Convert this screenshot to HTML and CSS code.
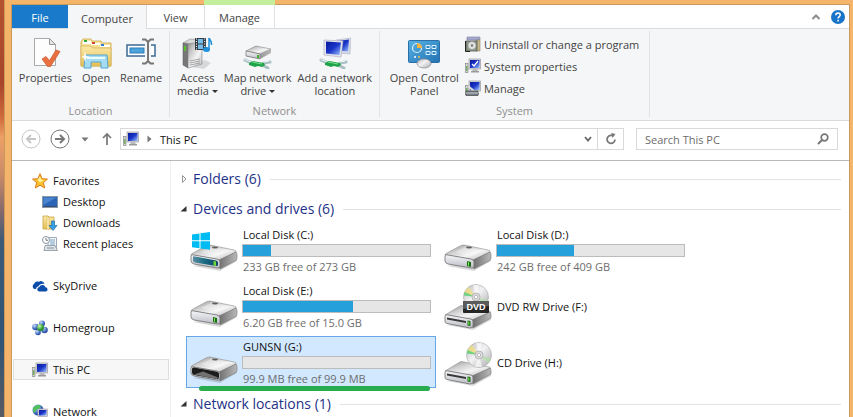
FILE: index.html
```html
<!DOCTYPE html>
<html lang="en">
<head>
    <meta charset="UTF-8">
    <meta name="viewport" content="width=device-width, initial-scale=1.0">
    <title>This PC</title>
    <link rel="stylesheet" href="styles.css">
</head>
<body>

<!-- Shared icon shapes -->
<svg class="sprite" aria-hidden="true">
    <defs>
        <linearGradient id="metal-top" x1="0" y1="0" x2="1" y2="1">
            <stop offset="0" stop-color="#8f8f8f"/>
            <stop offset=".35" stop-color="#d2d2d2"/>
            <stop offset=".6" stop-color="#f4f4f4"/>
            <stop offset="1" stop-color="#b4b4b4"/>
        </linearGradient>
        <linearGradient id="metal-side" x1="0" y1="0" x2="1" y2="0">
            <stop offset="0" stop-color="#6f6f6f"/>
            <stop offset="1" stop-color="#b9b9b9"/>
        </linearGradient>
        <linearGradient id="metal-front" x1="0" y1="0" x2="0" y2="1">
            <stop offset="0" stop-color="#f7f7fa"/>
            <stop offset="1" stop-color="#b9bbc4"/>
        </linearGradient>
        <linearGradient id="teal" x1="0" y1="0" x2="1" y2="0">
            <stop offset="0" stop-color="#5b8ea3"/>
            <stop offset=".5" stop-color="#17697f"/>
            <stop offset="1" stop-color="#12466a"/>
        </linearGradient>
        <linearGradient id="screen" x1="0" y1="0" x2="1" y2="1">
            <stop offset="0" stop-color="#0a1a9c"/>
            <stop offset=".5" stop-color="#1a35c8"/>
            <stop offset="1" stop-color="#9fc4ff"/>
        </linearGradient>
        <linearGradient id="gold" x1="0" y1="0" x2="0" y2="1">
            <stop offset="0" stop-color="#fbe9a8"/>
            <stop offset="1" stop-color="#e6bf55"/>
        </linearGradient>
        <linearGradient id="panel" x1="0" y1="0" x2="1" y2="1">
            <stop offset="0" stop-color="#57b2e4"/>
            <stop offset="1" stop-color="#2472b3"/>
        </linearGradient>
        <linearGradient id="disc" x1="0" y1="0" x2="1" y2="1">
            <stop offset="0" stop-color="#b5b5bb"/>
            <stop offset=".45" stop-color="#f3f3f5"/>
            <stop offset="1" stop-color="#a9a9ae"/>
        </linearGradient>
        <radialGradient id="ball-blue" cx=".35" cy=".3" r=".8">
            <stop offset="0" stop-color="#c9defa"/>
            <stop offset=".6" stop-color="#3f68bd"/>
            <stop offset="1" stop-color="#21408f"/>
        </radialGradient>
        <radialGradient id="ball-green" cx=".35" cy=".3" r=".8">
            <stop offset="0" stop-color="#d0f5b0"/>
            <stop offset=".6" stop-color="#35a43b"/>
            <stop offset="1" stop-color="#1c7326"/>
        </radialGradient>
    </defs>

    <symbol id="drive-body" viewBox="0 0 48 48">
        <path d="M3 40l27 5 17-10v-3z" fill="#000" opacity=".15"/>
        <path d="M1 29Q1 28 3 27L16 20q2-1 4-1l24 5q3 1 2 2L30 34z" fill="url(#metal-top)" stroke="#8c8c8c" stroke-width=".6"/>
        <path d="M11 26l10-5 16 4-9 5z" fill="#fff" opacity=".35"/>
        <ellipse cx="25" cy="21.500" rx="3" ry="1" fill="#5f5f5f"/>
        <path d="M29 34l17-8q1 1 1 3v3q0 2-2 3l-15 8z" fill="url(#metal-side)" stroke="#777" stroke-width=".6"/>
        <path d="M1 30q0-2 3-1l23 4q3 1 3 3v4q0 3-3 2L4 38q-3-1-3-3z" fill="url(#metal-front)" stroke="#6f6f6f" stroke-width=".8"/>
    </symbol>
    <symbol id="drive" viewBox="0 0 48 48">
        <use href="#drive-body"/>
        <path d="M23 35l4 1v5l-4-1z" fill="#1d6d17"/>
        <path d="M24 36l1 .3v3.500l-1-.2z" fill="#7cf04d"/>
    </symbol>
    <symbol id="drive-windows" viewBox="0 0 48 48">
        <use href="#drive-body"/>
        <path d="M3 31q0-1 2-.5l21 4q2 .5 2 2v2q0 2-2 1.500L5 36.500q-2-.5-2-2z" fill="url(#teal)"/>
        <path d="M23.500 35l2.500.5v4.500l-2.500-.5z" fill="#6fdc2f"/>
        <path d="M2 8.500L9.500 7.500v6.800H2zM10.500 7.300L20 6v8.300h-9.500zM2 15.300h7.500v7L2 21.200zM10.500 15.300H20v8.400l-9.500-1.300z" fill="#00bcf2"/>
    </symbol>
    <symbol id="drive-removable" viewBox="0 0 48 48">
        <use href="#drive-body"/>
        <path d="M2 31q0-2 2-1.500l22 4q3 .5 3 2.500v3q0 2.500-2 2L4 37q-2-.5-2-2.500z" fill="#1c1c1c"/>
        <path d="M4 36.500l9-3 15 6-1 1.500z" fill="#707070"/>
    </symbol>
    <symbol id="optical-body" viewBox="0 0 48 48">
        <path d="M3 43l26 5 18-10v-3z" fill="#000" opacity=".15"/>
        <path d="M1 33l15-9q1-1 4 0l25 5q3 1 1 2L29 38z" fill="url(#metal-top)" stroke="#8c8c8c" stroke-width=".6"/>
        <path d="M28 38l18-8q1 1 1 3v3L29 46z" fill="url(#metal-side)" stroke="#777" stroke-width=".6"/>
        <path d="M1 34q0-2 3-1l23 4q2 1 2 2v5q0 2-3 2L3 41.500q-2-.5-2-2z" fill="url(#metal-front)" stroke="#6f6f6f" stroke-width=".8"/>
        <path d="M3 35.500l19 3.500v2L3 37.500z" fill="#383838"/>
        <path d="M23.500 38.500l3 .5v5l-3-.5z" fill="#1d6d17"/>
        <path d="M24.300 39.500l1 .2v3l-1-.2z" fill="#7cf04d"/>
    </symbol>
    <symbol id="disc-shape" viewBox="0 0 26 26">
        <circle cx="13" cy="13" r="12.500" fill="url(#disc)" stroke="#a8a8a8" stroke-width=".6"/>
        <path d="M13 13L1 9.500Q2.500 5 6 3z" fill="#f0dc7a" opacity=".75"/>
        <path d="M13 13L.8 11.500 1.500 8z" fill="#62cf7b" opacity=".9"/>
        <path d="M13 13l12 3.500-2.500 4.500z" fill="#aee0a2" opacity=".7"/>
        <path d="M13 13L10 1l6 0zM13 13l-4 12 7 0z" fill="#fff" opacity=".65"/>
        <circle cx="13" cy="13" r="4" fill="#ddd" stroke="#a5a5a5" stroke-width=".7"/>
        <circle cx="13" cy="13" r="1.700" fill="#fff" stroke="#999" stroke-width=".6"/>
    </symbol>

    <symbol id="pc" viewBox="0 0 16 16">
        <rect x=".5" y="5.500" width="2.500" height="9" fill="#d9d9d9" stroke="#888" stroke-width=".7"/>
        <rect x="1.200" y="8" width="1.200" height="5" fill="#5fa64b"/>
        <rect x="4" y="1" width="11.500" height="10" fill="#d8d8de" stroke="#9a9a9f" stroke-width=".7"/>
        <rect x="5" y="2" width="9.500" height="8" fill="url(#screen)"/>
        <path d="M8 11h4l1 2.500H7z" fill="#b9b9b9"/>
        <rect x="6" y="13" width="8" height="1.500" fill="#999"/>
    </symbol>
    <symbol id="net-cable" viewBox="0 0 30 12">
        <path d="M2 3l7 3M21 6l6-1M19 8l6 3" stroke="#a8bfc3" stroke-width="3" stroke-linecap="round"/>
        <path d="M2 2.500l6 2.500M21 5l5-1" stroke="#eef7f7" stroke-width="1" stroke-linecap="round"/>
        <path d="M6 6l4-2 11 2 1 2-3 2-4-1-3 1-6-2z" fill="#1ea34a"/>
        <path d="M9 5l10 2" stroke="#78dd8e" stroke-width="1"/>
    </symbol>
</svg>

<div class="desktop">
    <div class="frame">
        <div class="window">

            <nav class="tabs" aria-label="Ribbon tabs">
                <button class="tab tab-file" type="button">File</button>
                <button class="tab tab-active" type="button">Computer</button>
                <button class="tab tab-view" type="button">View</button>
                <button class="tab tab-manage" type="button">Manage</button>
                <div class="tabs-end">
                    <button class="icon-btn" type="button" aria-label="Collapse ribbon">
                        <svg width="10" height="8" viewBox="0 0 10 8"><path d="M1.500 6L5 2.500 8.500 6" fill="none" stroke="#8c8c8c" stroke-width="2"/></svg>
                    </button>
                    <button class="icon-btn" type="button" aria-label="Help">
                        <svg width="14" height="14" viewBox="0 0 14 14"><circle cx="7" cy="7" r="7" fill="#1874c8"/><path d="M4.800 5.300C4.800 3.800 5.700 3 7 3s2.200.8 2.200 2c0 1.600-2.100 1.700-2.100 3.600" fill="none" stroke="#fff" stroke-width="1.500"/><rect x="6.300" y="9.800" width="1.600" height="1.600" fill="#fff"/></svg>
                    </button>
                </div>
            </nav>

            <div class="ribbon">
                <section class="group group-location">
                    <div class="group-buttons">
                        <button class="big-btn" type="button">
                            <svg width="32" height="32" viewBox="0 0 32 32">
                                <path d="M5.500 1.500h15l6 6v21h-21z" fill="#fdfdfd" stroke="#a9a9a9"/>
                                <path d="M20.500 1.500v6h6z" fill="#e4e4e4" stroke="#999"/>
                                <path d="M13 22l4-2.500 3.500 4L27 13l4 1.500-9.500 15h-3z" fill="#e8713f" stroke="#c9562b" stroke-width=".7"/>
                            </svg>
                            <span>Properties</span>
                        </button>
                        <button class="big-btn" type="button">
                            <svg width="32" height="32" viewBox="0 0 32 32">
                                <path d="M1 29V5l2-3h8l1 2h9l1 2h9v23z" fill="url(#gold)" stroke="#c9a345" stroke-width=".8"/>
                                <path d="M3 4h8v3H3zM11 6h9v2h-9zM20 8h10v2H20z" fill="#fff"/>
                                <rect x="4" y="3" width="3" height="2" fill="#2faa3c"/>
                                <rect x="12" y="5" width="3" height="2" fill="#d54a2d"/>
                                <rect x="21" y="7" width="3" height="2" fill="#2e7fd0"/>
                                <path d="M1 9h9l3 2h18v18H1z" fill="url(#gold)" stroke="#d6b45a" stroke-width=".8"/>
                                <path d="M5 18h22l1 13h-7v-6H11v6H4z" fill="#a5dcf2" stroke="#55a5cc"/>
                                <path d="M7 20h18v2H7z" fill="#e9fbff"/>
                                <path d="M5 14l1 5 4 1-4 1-1 4-1-4-3-1 3-1z" fill="#fff"/>
                            </svg>
                            <span>Open</span>
                        </button>
                        <button class="big-btn" type="button">
                            <svg width="32" height="32" viewBox="0 0 32 32">
                                <rect x="2" y="8" width="28" height="11" fill="#fff" stroke="#3d6a94" stroke-width="1.500"/>
                                <rect x="5" y="11" width="14" height="5" fill="#4ba3dc" stroke="#2c7db8"/>
                                <rect x="20" y="6" width="6" height="15" fill="#f5f6f7"/>
                                <path d="M17 2.500h3.500L23 5l2.500-2.500H29M17 26.500h3.500L23 24l2.500 2.500H29M23 4v21" fill="none" stroke="#777" stroke-width="2"/>
                            </svg>
                            <span>Rename</span>
                        </button>
                    </div>
                    <h2 class="group-title">Location</h2>
                </section>

                <section class="group group-network">
                    <div class="group-buttons">
                        <button class="big-btn" type="button">
                            <svg width="32" height="32" viewBox="0 0 32 32">
                                <path d="M5 29l18 3 7-6-6-3z" fill="#000" opacity=".12"/>
                                <path d="M2 6l7-4 14 1-6 4z" fill="#d9d9d9" stroke="#888" stroke-width=".6"/>
                                <path d="M2 6l5 1v24l-5-3z" fill="#777" stroke="#666" stroke-width=".6"/>
                                <path d="M7 7l14-2v22L7 31z" fill="url(#metal-top)" stroke="#888" stroke-width=".6"/>
                                <path d="M9 24l10-2M9 26l10-2M9 28l10-2" stroke="#8a8a8a" stroke-width=".7"/>
                                <rect x="3" y="9" width="2" height="5" fill="#57c22d"/>
                                <rect x="14" y="1" width="11" height="12" fill="#353d46"/>
                                <path d="M17 2h5v4.500h-5zM17 7.500h5V12h-5z" fill="#78bce8"/>
                                <path d="M15.500 1.500v11M23.700 1.500v11" stroke="#fff" stroke-dasharray="1 1.500"/>
                                <path d="M28 12V1c1 2 3 3 2.500 7" fill="none" stroke="#1e90dc" stroke-width="1.500"/>
                                <ellipse cx="25.500" cy="12.500" rx="3.500" ry="2.500" fill="#1e90dc"/>
                            </svg>
                            <span>Access<br>media <i class="caret"></i></span>
                        </button>
                        <button class="big-btn" type="button">
                            <svg width="32" height="32" viewBox="0 0 32 32">
                                <path d="M4 14l10-5 15 3v4l-11 6-14-3z" fill="url(#metal-side)"/>
                                <path d="M4 14l10-5 15 3-11 5z" fill="url(#metal-top)" stroke="#999" stroke-width=".6"/>
                                <path d="M4 14l14 3v5L4 19z" fill="url(#metal-front)" stroke="#777" stroke-width=".7"/>
                                <rect x="15" y="18" width="2" height="3" fill="#3fae28"/>
                                <use href="#net-cable" x="1" y="20" width="30" height="12"/>
                            </svg>
                            <span>Map network<br>drive <i class="caret"></i></span>
                        </button>
                        <button class="big-btn" type="button">
                            <svg width="32" height="32" viewBox="0 0 32 32">
                                <path d="M17 3l15-2-1 16-12-1z" fill="#d5d9e6" stroke="#b0b5c4" stroke-width=".6"/>
                                <path d="M19 4l11-1.500-1 12-8-1z" fill="url(#screen)"/>
                                <path d="M5 3l19 1-2 16-17-2z" fill="#e3e6ef" stroke="#aab" stroke-width=".6"/>
                                <path d="M7 4.500l15 1-1.500 12.500L7 16.500z" fill="url(#screen)"/>
                                <use href="#net-cable" x="0" y="20" width="30" height="12"/>
                            </svg>
                            <span>Add a network<br>location</span>
                        </button>
                    </div>
                    <h2 class="group-title">Network</h2>
                </section>

                <section class="group group-system">
                    <div class="group-buttons">
                        <button class="big-btn" type="button">
                            <svg width="32" height="32" viewBox="0 0 32 32">
                                <rect x=".5" y="3.500" width="31" height="22" rx="1" fill="url(#panel)" stroke="#2a6fa8"/>
                                <circle cx="9" cy="11" r="4.500" fill="none" stroke="#d9f0fb" stroke-width="1.200"/>
                                <path d="M9 11V6a5 5 0 0 1 5 5z" fill="#f5b13d"/>
                                <path d="M18 8.500h4v3h-4zM24 8.500h4v3h-4zM18 14.500h4v3h-4zM24 14.500h4v3h-4z" fill="#2f86c4" stroke="#dff3ff"/>
                                <circle cx="7" cy="20" r="1" fill="#fff"/><circle cx="11" cy="20" r="1" fill="#f5c13d"/>
                                <ellipse cx="16" cy="26.500" rx="7" ry="4.500" fill="url(#disc)" stroke="#8c8c8c" stroke-width=".7"/>
                            </svg>
                            <span>Open Control<br>Panel</span>
                        </button>
                        <div class="small-buttons">
                            <button class="small-btn" type="button">
                                <svg width="16" height="16" viewBox="0 0 16 16">
                                    <path d="M2 1h13v3H2z" fill="#a6a9cf" stroke="#7a7da5" stroke-width=".6"/>
                                    <path d="M11 4h4v11h-4z" fill="#c5b98b" stroke="#8d8566" stroke-width=".6"/>
                                    <rect x="1" y="5" width="11" height="10" fill="#8b9a86" stroke="#555" stroke-width=".8"/>
                                    <circle cx="7" cy="9.500" r="4" fill="#e2e2e2" stroke="#8d8d8d" stroke-width=".6"/>
                                    <circle cx="7" cy="9.500" r="1.200" fill="#777"/>
                                    <path d="M.5 5v10.500H5" fill="none" stroke="#222"/>
                                </svg>
                                <span>Uninstall or change a program</span>
                            </button>
                            <button class="small-btn" type="button">
                                <svg width="16" height="16" viewBox="0 0 16 16"><use href="#pc"/><path d="M7 6l2 2 4-5" fill="none" stroke="#fff" stroke-width="1.300"/></svg>
                                <span>System properties</span>
                            </button>
                            <button class="small-btn" type="button">
                                <svg width="16" height="16" viewBox="0 0 16 16"><use href="#pc"/><path d="M3 6l6 5" stroke="#ddd" stroke-width="2"/><rect x="1" y="11" width="12" height="4.500" fill="#6f7f88" stroke="#444" stroke-width=".7"/><path d="M1 13h12" stroke="#ccc"/></svg>
                                <span>Manage</span>
                            </button>
                        </div>
                    </div>
                    <h2 class="group-title">System</h2>
                </section>
            </div>

            <div class="toolbar">
                <div class="nav-buttons">
                    <button class="icon-btn" type="button" aria-label="Back">
                        <svg width="20" height="20" viewBox="0 0 20 20" fill="none" stroke="#c6c6c6"><circle cx="10" cy="10" r="9"/><path d="M15 10H6M10 6l-4 4 4 4" stroke-width="2"/></svg>
                    </button>
                    <button class="icon-btn" type="button" aria-label="Forward">
                        <svg width="20" height="20" viewBox="0 0 20 20" fill="none" stroke="#777"><circle cx="10" cy="10" r="9"/><path d="M5 10h9M10 6l4 4-4 4" stroke-width="2"/></svg>
                    </button>
                    <button class="icon-btn" type="button" aria-label="Recent locations">
                        <svg width="8" height="5" viewBox="0 0 8 5"><path d="M.5.5h7L4 4.500z" fill="#777"/></svg>
                    </button>
                    <button class="icon-btn" type="button" aria-label="Up">
                        <svg width="10" height="14" viewBox="0 0 10 14" fill="none" stroke="#777" stroke-width="1.700"><path d="M5 13V2M1 6l4-4 4 4"/></svg>
                    </button>
                </div>
                <div class="address">
                    <svg width="16" height="16"><use href="#pc"/></svg>
                    <svg width="5" height="8" viewBox="0 0 5 8"><path d="M.5.5l4 3.500-4 3.500z" fill="#777"/></svg>
                    <a class="crumb" href="#">This PC</a>
                    <button class="icon-btn address-history" type="button" aria-label="Previous locations">
                        <svg width="8" height="8" viewBox="0 0 8 8"><path d="M1 2l3 3.500L7 2" fill="none" stroke="#666" stroke-width="1.800"/></svg>
                    </button>
                    <button class="icon-btn refresh" type="button" aria-label="Refresh">
                        <svg width="12" height="12" viewBox="0 0 12 12"><path d="M7 2.500A4 4 0 1 0 10 6.500" fill="none" stroke="#777" stroke-width="1.700"/><path d="M6 0l4.500 1-3 4z" fill="#777"/></svg>
                    </button>
                </div>
                <div class="search">
                    <input type="search" placeholder="Search This PC" aria-label="Search This PC">
                    <svg width="12" height="12" viewBox="0 0 12 12" fill="none" stroke="#777"><circle cx="7.500" cy="4.500" r="3.300" stroke-width="1.700"/><path d="M5 7L1 11" stroke-width="2"/></svg>
                </div>
            </div>

            <div class="content">
                <nav class="sidebar" aria-label="Navigation">
                    <div class="tree">
                        <a class="node" href="#">
                            <svg width="16" height="16" viewBox="0 0 16 16"><path d="M8 .7l2.100 5 5.400.4-4.100 3.500 1.300 5.400L8 12.200 3.300 15l1.300-5.400L.5 6.100l5.400-.4z" fill="#fbc02d" stroke="#dc7d1d"/><path d="M8 3.500l1.300 3.300 2.700.3L8 9.500 5.500 7z" fill="#fff19c"/></svg>
                            Favorites
                        </a>
                        <a class="node child" href="#">
                            <svg width="16" height="16" viewBox="0 0 16 16"><rect x=".5" y="2.500" width="15" height="11" fill="#2c65b8" stroke="#8a97a8"/><path d="M1.500 3.500h13L1.500 11z" fill="#629bdc" opacity=".6"/><path d="M1 12.500h14" stroke="#36506e"/></svg>
                            Desktop
                        </a>
                        <a class="node child" href="#">
                            <svg width="16" height="16" viewBox="0 0 16 16"><path d="M1 1h5l1 1h5v12H1z" fill="url(#gold)" stroke="#c9a345" stroke-width=".8"/><path d="M5 3l2-1v13l-2-1z" fill="#fff2bc" stroke="#d0ae55" stroke-width=".5"/><path d="M9.500 6h3v4.500H15L11 15.500 7 10.500h2.500z" fill="#3aa0e6" stroke="#1b6fb3" stroke-width=".7"/></svg>
                            Downloads
                        </a>
                        <a class="node child" href="#">
                            <svg width="16" height="16" viewBox="0 0 16 16"><path d="M6 1.500h8.500v10H6z" fill="#f2f6f9" stroke="#8698a6" stroke-width=".8"/><path d="M8 4h5M8 6h5M8 8h5" stroke="#78a3c4"/><path d="M3 9.500h10l2.500 5H2z" fill="#dde3e7" stroke="#87929b" stroke-width=".8"/><path d="M5 12h7" stroke="#87929b"/><circle cx="4" cy="4" r="3.500" fill="#fff" stroke="#8698a6"/><path d="M4 2v2.300h2" fill="none" stroke="#555" stroke-width=".8"/></svg>
                            Recent places
                        </a>
                    </div>
                    <div class="tree">
                        <a class="node" href="#">
                            <svg width="16" height="16" viewBox="0 0 16 16"><path d="M2.500 11A2.800 2.800 0 0 1 2 6a3.500 3.500 0 0 1 5-2.200A3.500 3.500 0 0 1 12.500 6C9 5 7 7 6.500 8.500 4.500 8.500 4 10 4.200 11z" fill="#0a4da8"/><path d="M7 13.500a2.300 2.300 0 0 1 .3-4.500 3.300 3.300 0 0 1 6.200.2 2.200 2.200 0 0 1 .5 4.300z" fill="#0a4da8"/></svg>
                            SkyDrive
                        </a>
                    </div>
                    <div class="tree">
                        <a class="node" href="#">
                            <svg width="16" height="16" viewBox="0 0 16 16"><circle cx="10" cy="3.500" r="3" fill="url(#ball-blue)"/><circle cx="3.500" cy="7" r="3.300" fill="url(#ball-blue)"/><circle cx="12.500" cy="10" r="3.300" fill="url(#ball-blue)"/><circle cx="6" cy="12.500" r="2.800" fill="url(#ball-blue)"/><circle cx="8.500" cy="7.500" r="3.500" fill="url(#ball-green)"/></svg>
                            Homegroup
                        </a>
                    </div>
                    <div class="tree">
                        <a class="node node-selected" href="#">
                            <svg width="16" height="16"><use href="#pc"/></svg>
                            This PC
                        </a>
                    </div>
                    <div class="tree">
                        <a class="node" href="#">
                            <svg width="16" height="16" viewBox="0 0 16 16"><circle cx="6" cy="6" r="5.500" fill="url(#ball-blue)"/><path d="M2 3c3-3 6-2 7-1L7 5 4 6 3 9C1 8 0 5 2 3z" fill="#4fc05a"/><rect x="6" y="5" width="9.500" height="7.500" fill="#d8d8de" stroke="#9a9a9f" stroke-width=".6"/><rect x="7" y="6" width="7.500" height="5.500" fill="url(#screen)"/><path d="M8 14h6" stroke="#999" stroke-width="1.500"/></svg>
                            Network
                        </a>
                    </div>
                </nav>

                <main class="files">
                    <h1 class="section-title">
                        <svg width="8" height="10" viewBox="0 0 8 10"><path d="M2.500 1.500L6 5 2.500 8.500z" fill="#fff" stroke="#999"/></svg>
                        Folders (6)
                    </h1>
                    <h1 class="section-title">
                        <svg width="8" height="10" viewBox="0 0 8 10"><path d="M6.500 2v5.500H.5z" fill="#333"/></svg>
                        Devices and drives (6)
                    </h1>

                    <div class="drives">
                        <div class="drive">
                            <svg width="48" height="48"><use href="#drive-windows"/></svg>
                            <div class="info">
                                <div class="name">Local Disk (C:)</div>
                                <div class="bar"><div class="bar-fill" style="width: 15%"></div></div>
                                <div class="space">233 GB free of 273 GB</div>
                            </div>
                        </div>
                        <div class="drive">
                            <svg width="48" height="48"><use href="#drive"/></svg>
                            <div class="info">
                                <div class="name">Local Disk (D:)</div>
                                <div class="bar"><div class="bar-fill" style="width: 41%"></div></div>
                                <div class="space">242 GB free of 409 GB</div>
                            </div>
                        </div>
                        <div class="drive">
                            <svg width="48" height="48"><use href="#drive"/></svg>
                            <div class="info">
                                <div class="name">Local Disk (E:)</div>
                                <div class="bar"><div class="bar-fill" style="width: 59%"></div></div>
                                <div class="space">6.20 GB free of 15.0 GB</div>
                            </div>
                        </div>
                        <div class="drive">
                            <svg width="48" height="48" viewBox="0 0 48 48">
                                <use href="#optical-body"/>
                                <use href="#disc-shape" x="19" y="2" width="26" height="26"/>
                                <rect x="19" y="19" width="26" height="12" rx="1" fill="#262626"/>
                                <path d="M19 20q0-1 1-1h24q1 0 1 1v4q-13 0-26 3z" fill="#5b5b5b"/>
                                <text x="32" y="28" class="dvd-text">DVD</text>
                            </svg>
                            <div class="info">
                                <div class="name">DVD RW Drive (F:)</div>
                            </div>
                        </div>
                        <div class="drive drive-selected">
                            <svg width="48" height="48"><use href="#drive-removable"/></svg>
                            <div class="info">
                                <div class="name">GUNSN (G:)</div>
                                <div class="bar"><div class="bar-fill" style="width: 0%"></div></div>
                                <div class="space">99.9 MB free of 99.9 MB</div>
                            </div>
                            <div class="marker"></div>
                        </div>
                        <div class="drive">
                            <svg width="48" height="48" viewBox="0 0 48 48">
                                <use href="#optical-body"/>
                                <use href="#disc-shape" x="22" y="4" width="26" height="26"/>
                            </svg>
                            <div class="info">
                                <div class="name">CD Drive (H:)</div>
                            </div>
                        </div>
                    </div>

                    <h1 class="section-title">
                        <svg width="8" height="10" viewBox="0 0 8 10"><path d="M6.500 2v5.500H.5z" fill="#333"/></svg>
                        Network locations (1)
                    </h1>
                </main>
            </div>

        </div>
    </div>
</div>

</body>
</html>
```
FILE: styles.css
```css
* {
    box-sizing: border-box;
}
body {
    margin: 0;
    font-family: "Open Sans", "Noto Sans", sans-serif;
    font-size: 11px;
    line-height: 17px;
    color: #111;
}
button,
input {
    font: inherit;
    color: inherit;
    margin: 0;
    padding: 0;
    border: none;
    background: none;
}
a {
    color: inherit;
    text-decoration: none;
}
svg {
    display: block;
    flex: none;
}
.sprite {
    position: absolute;
    width: 0;
    height: 0;
}
.dvd-text {
    font-family: "Liberation Sans", sans-serif;
    font-size: 9px;
    font-weight: bold;
    fill: #fff;
    text-anchor: middle;
}

/* Wallpaper and window frame */
.desktop {
    height: 100vh;
    overflow: hidden;
    padding-left: 4px;
    background: linear-gradient(#b4532f 0, #a8452a 20%, #cf6a3a 28%, #eda066 33%, #c98a68 42%, #8a6a6a 50%, #3c5a78 58%, #2f5475 82%, #5a5a62 100%);
}
.frame {
    min-height: 100%;
    padding: 4px 3px 0 6px;
    background: #f4b469;
    border-left: 1px solid #c99a5b;
}
.window {
    background: #fff;
    border: 1px solid #c99a5b;
    border-bottom: none;
}

/* Tabs */
.tabs {
    display: flex;
    height: 24px;
    border-bottom: 1px solid #dadbdc;
    color: #444;
}
.tab {
    height: 23px;
    padding-top: 2px;
    text-align: center;
}
.tab-file {
    width: 56px;
    background: #1979ca;
    color: #fff;
}
.tab-active {
    width: 79px;
    height: 24px;
    background: #f5f6f7;
    border-right: 1px solid #dadbdc;
}
.tab-view {
    width: 57px;
}
.tab-manage {
    width: 71px;
    border-left: 1px solid #e2e2e2;
    border-right: 1px solid #e2e2e2;
    box-shadow: 0 -5px #c3ee9c;
}
.tabs-end {
    display: flex;
    gap: 10px;
    margin-left: auto;
    padding-right: 4px;
}
.icon-btn {
    display: flex;
    align-items: center;
    justify-content: center;
}

/* Ribbon */
.ribbon {
    display: flex;
    height: 92px;
    padding: 2px 0 3px;
    background: #f5f6f7;
    border-bottom: 1px solid #dadbdc;
    color: #444;
}
.group {
    display: flex;
    flex-direction: column;
    justify-content: space-between;
    border-right: 1px solid #e2e3e4;
}
.group-location {
    width: 158px;
}
.group-network {
    width: 210px;
}
.group-system {
    width: 270px;
}
.group-buttons {
    display: flex;
    align-items: flex-start;
    justify-content: center;
    gap: 6px;
}
.group-location .group-buttons {
    gap: 8px;
}
.big-btn {
    display: flex;
    flex-direction: column;
    align-items: center;
    gap: 2px;
    padding-top: 6px;
    line-height: 13px;
    white-space: nowrap;
}
.caret {
    display: inline-block;
    vertical-align: 2px;
    border: 3px solid transparent;
    border-top-color: #333;
    border-bottom: none;
}
.small-buttons {
    display: flex;
    flex-direction: column;
    padding-top: 2px;
}
.small-btn {
    display: flex;
    align-items: center;
    gap: 3px;
    height: 22px;
    white-space: nowrap;
}
.group-title {
    margin: 0;
    font-size: 11px;
    line-height: 13px;
    font-weight: normal;
    text-align: center;
    color: #8f8f8f;
}

/* Address bar */
.toolbar {
    display: flex;
    align-items: center;
    height: 40px;
    padding: 0 11px 3px 9px;
    border-bottom: 1px solid #b9b9b9;
}
.nav-buttons {
    display: flex;
    align-items: center;
    gap: 9px;
    padding-right: 6px;
}
.nav-buttons .icon-btn + .icon-btn + .icon-btn {
    padding: 0 2px;
}
.address {
    display: flex;
    flex: 1;
    align-items: center;
    height: 22px;
    padding-left: 2px;
    border: 1px solid #d9d9d9;
}
.address > svg + svg {
    margin: 0 8px;
}
.crumb {
    flex: 1;
}
.address-history {
    width: 18px;
    height: 20px;
}
.refresh {
    width: 26px;
    height: 20px;
    border-left: 1px solid #d9d9d9;
}
.search {
    display: flex;
    align-items: center;
    width: 202px;
    height: 22px;
    margin-left: 12px;
    padding: 0 8px;
    border: 1px solid #d9d9d9;
}
.search input {
    flex: 1;
    min-width: 0;
    outline: none;
}
.search input::placeholder {
    color: #6d6d6d;
}

/* Navigation pane */
.content {
    display: flex;
}
.sidebar {
    display: flex;
    flex-direction: column;
    flex: none;
    gap: 21px;
    width: 159px;
    padding: 9px 1px 0;
    border-right: 1px solid #f0f0f0;
}
.node {
    display: flex;
    align-items: center;
    gap: 5px;
    height: 21px;
    padding-left: 18px;
    border: 1px solid transparent;
}
.child {
    padding-left: 28px;
}
.node-selected {
    background: #f7f7f7;
    border-color: #dedede;
}

/* Drives */
.files {
    flex: 1;
    padding: 3px 8px 0 9px;
}
.section-title {
    display: flex;
    align-items: center;
    gap: 5px;
    height: 30px;
    margin: 0;
    font-size: 14px;
    line-height: 20px;
    font-weight: normal;
    color: #1e3287;
}
.section-title::after {
    content: "";
    flex: 1;
    height: 1px;
    margin-left: 4px;
    background: #e2e2e2;
}
.drives {
    display: grid;
    grid-template-columns: repeat(auto-fill, 250px);
    gap: 4px;
    padding: 0 100px 1px 6px;
}
.drive {
    position: relative;
    display: flex;
    align-items: center;
    gap: 4px;
    height: 52px;
    padding: 0 4px 0 3px;
    border: 1px solid transparent;
}
.drive-selected {
    background: #d1e8ff;
    border-color: #66a7e8;
}
.info {
    flex: 1;
}
.name,
.space {
    padding-left: 1px;
}
.space {
    color: #6d6d6d;
}
.bar {
    height: 13px;
    margin: 1px 0;
    background: #e6e6e6;
    border: 1px solid #bcbcbc;
}
.bar-fill {
    height: 100%;
    background: #26a0da;
}
.marker {
    position: absolute;
    left: 12px;
    right: 5px;
    bottom: -4px;
    height: 5px;
    border-radius: 3px;
    background: #27ad4f;
}
```
